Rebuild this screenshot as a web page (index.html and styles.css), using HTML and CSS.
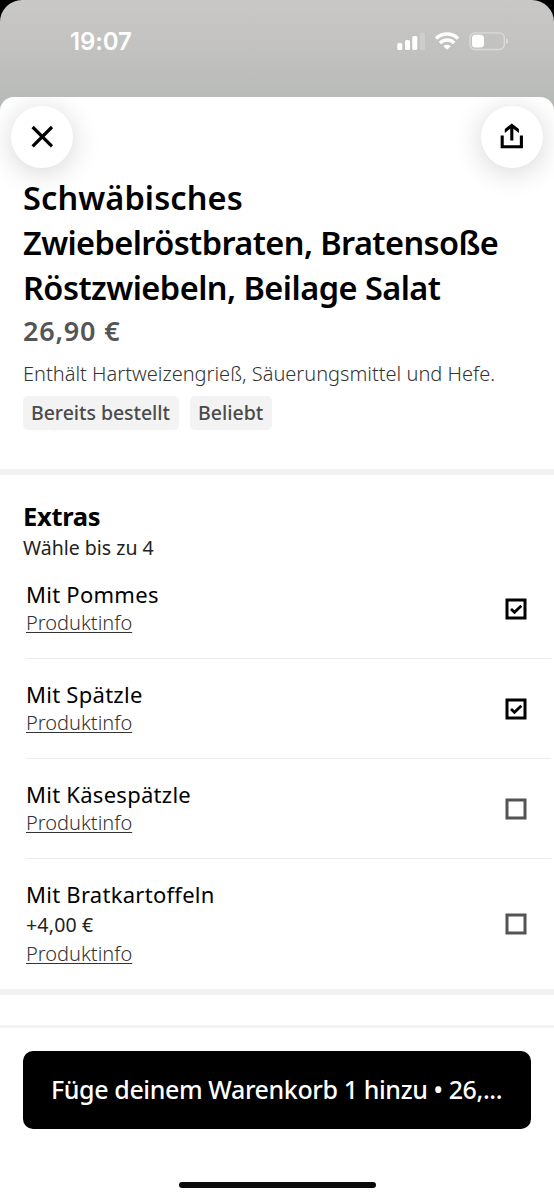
FILE: index.html
```html
<!DOCTYPE html>
<html lang="de">
<head>
<meta charset="utf-8">
<title>Schwäbisches Zwiebelröstbraten</title>
<link rel="stylesheet" href="styles.css">
</head>
<body>
<div class="screen">
  <header class="status">
    <span class="time">19:07</span>
    <svg class="indicators" width="112" height="20" viewBox="0 0 112 20" fill="#fff">
      <rect x="0.3" y="11" width="5" height="7" rx="1.5"/>
      <rect x="8" y="8" width="5" height="10" rx="1.5"/>
      <rect x="15.3" y="4" width="5" height="14" rx="1.5"/>
      <rect x="23" y="0.5" width="5" height="17.5" rx="1.5" opacity=".2"/>
      <g fill="none" stroke="#fff" stroke-width="3.5">
        <path d="M39.1 6.5A15.8 15.8 0 0 1 61.1 6.5"/>
        <path d="M43 10.9A10 10 0 0 1 57.2 10.9"/>
      </g>
      <path d="M50.1 17.8L46.4 14.2A5.4 5.4 0 0 1 53.8 14.2Z"/>
      <rect x="73" y="0.9" width="34.3" height="16.6" rx="5" fill="none" stroke="#fff" stroke-width="1.4" opacity=".4"/>
      <rect x="75" y="2.8" width="12" height="12.8" rx="3.6"/>
      <path d="M109 6.3Q111 7 111 9.2T109 12.1Z" opacity=".45"/>
    </svg>
  </header>
  <main class="sheet">
    <nav class="actions">
      <button class="round" aria-label="Schließen">
        <svg width="24" height="24" viewBox="0 0 24 24" fill="none" stroke="#000" stroke-width="3.2"><path d="M2.6 2L22 21.4M22 2L2.6 21.4"/></svg>
      </button>
      <button class="round" aria-label="Teilen">
        <svg width="24" height="28" viewBox="0 0 24 28" fill="none" stroke="#000" stroke-width="3.1"><path d="M2.2 12.6V23.8H21.4V12.6M11.8 17.5V3"/><path d="M11.8 0.4L18.9 6V10L11.8 4.4L4.8 10V6Z" fill="#000" stroke="none"/></svg>
      </button>
    </nav>
    <section class="product">
      <h1 class="title"><span class="t1">Schwäbisches</span><br><span class="t2">Zwiebelröstbraten, Bratensoße</span><br><span class="t3">Röstzwiebeln, Beilage Salat</span></h1>
      <p class="price">26,90 €</p>
      <p class="description">Enthält Hartweizengrieß, Säuerungsmittel und Hefe.</p>
      <div class="tags"><span class="tag tag-wide">Bereits bestellt</span><span class="tag tag-short">Beliebt</span></div>
    </section>
    <section class="extras">
      <h2 class="heading">Extras</h2>
      <p class="hint">Wähle bis zu 4</p>
      <ul class="options">
        <li class="option">
          <div><div class="name">Mit Pommes</div><a class="info">Produktinfo</a></div>
          <svg class="box" viewBox="0 0 22 22"><path class="frame on" d="M2 2H20V20H2Z"/><path class="tick" d="M6 11L9.5 14.3L16.3 7.8"/></svg>
        </li>
        <li class="option">
          <div><div class="name">Mit Spätzle</div><a class="info">Produktinfo</a></div>
          <svg class="box" viewBox="0 0 22 22"><path class="frame on" d="M2 2H20V20H2Z"/><path class="tick" d="M6 11L9.5 14.3L16.3 7.8"/></svg>
        </li>
        <li class="option">
          <div><div class="name">Mit Käsespätzle</div><a class="info">Produktinfo</a></div>
          <svg class="box" viewBox="0 0 22 22"><path class="frame" d="M2 2H20V20H2Z"/></svg>
        </li>
        <li class="option last">
          <div><div class="name">Mit Bratkartoffeln</div><div class="surcharge">+4,00 €</div><a class="info">Produktinfo</a></div>
          <svg class="box" viewBox="0 0 22 22"><path class="frame" d="M2 2H20V20H2Z"/></svg>
        </li>
      </ul>
    </section>
    <footer class="footer">
      <button class="cart">Füge deinem Warenkorb 1 hinzu • 26,...</button>
      <div class="home"></div>
    </footer>
  </main>
</div>
</body>
</html>
```
FILE: styles.css
```css
* { box-sizing: border-box; }
body, h1, h2, p, ul { margin: 0; padding: 0; }
body { background: #000; font-family: "Noto Sans", sans-serif; color: #000; }
button { border: 0; padding: 0; font-family: inherit; }
.screen {
  height: 1200px;
  overflow: hidden;
  border-radius: 22px 22px 0 0;
  background: linear-gradient(#c9c8c7, #c0c0be 60px, #b6bab6 105px);
  display: flex;
  flex-direction: column;
}
.status {
  flex: none;
  height: 97px;
  padding: 28px 45px 0 70px;
  display: flex;
  align-items: flex-start;
  justify-content: space-between;
}
.time { font: 600 24px/28px Inter, sans-serif; color: #fff; letter-spacing: -0.15px; }
.indicators { margin-top: 4px; }
.sheet {
  flex: 1;
  background: #fff;
  border-radius: 14px 14px 0 0;
  overflow: hidden;
  display: flex;
  flex-direction: column;
}
.actions { display: flex; justify-content: space-between; padding: 9px 11px 0; height: 78px; }
.round {
  width: 62px;
  height: 62px;
  border-radius: 50%;
  background: #fff;
  box-shadow: 0 4px 28px rgba(0, 0, 0, .17);
  display: flex;
  align-items: center;
  justify-content: center;
}
.product { height: 300px; padding-left: 23px; border-bottom: 6px solid #f3f3f3; white-space: nowrap; }
.title { font-size: 32.5px; line-height: 45px; font-weight: 600; }
.t1 { letter-spacing: 0.1px; }
.t2 { letter-spacing: -0.59px; }
.t3 { letter-spacing: -0.53px; }
.price { margin-top: 2px; font-size: 27px; line-height: 38px; font-weight: 600; letter-spacing: 0.8px; color: #555; }
.description { margin-top: 10px; font-size: 20px; line-height: 28px; font-weight: 300; color: #333; }
.tags { display: flex; gap: 11px; margin-top: 8px; }
.tag {
  height: 34px;
  border-radius: 5px;
  background: #f3f3f3;
  padding-left: 8px;
  font-size: 19.5px;
  line-height: 34px;
  font-weight: 500;
  color: #4b4b4b;
}
.tag-wide { width: 156px; letter-spacing: -0.05px; }
.tag-short { width: 82px; }
.extras { padding-top: 23px; border-bottom: 6px solid #f3f3f3; }
.heading { padding-left: 23px; font-size: 25.5px; line-height: 36px; font-weight: 700; letter-spacing: -0.3px; }
.hint { padding: 2px 0 0 23px; margin-bottom: -1px; font-size: 19.5px; line-height: 24px; color: #222; }
.options { list-style: none; padding-left: 26px; }
.option {
  display: flex;
  align-items: center;
  justify-content: space-between;
  height: 100px;
  margin-right: 3px;
  padding-right: 24px;
  border-bottom: 1px solid #ececec;
}
.last { height: 130px; border-bottom: 0; }
.name { margin-top: -1px; padding-bottom: 1px; font-size: 22px; line-height: 28px; font-weight: 450; letter-spacing: 0.27px; }
.surcharge { font-size: 19.5px; line-height: 31px; letter-spacing: 0.2px; color: #222; }
.info {
  display: block;
  width: max-content;
  font-size: 20px;
  line-height: 28px;
  font-weight: 300;
  color: #333;
  text-decoration: underline;
  text-decoration-thickness: 1px;
  text-underline-offset: 2px;
  text-decoration-skip-ink: none;
}
.box { width: 22px; height: 22px; }
.frame { fill: none; stroke: #545454; stroke-width: 3; }
.on { stroke: #000; }
.tick { fill: none; stroke: #000; stroke-width: 2.8; }
.footer { margin-top: 30px; padding: 23px 23px 0; border-top: 3px solid #f3f3f3; }
.cart {
  display: block;
  width: 508px;
  height: 78px;
  border-radius: 10px;
  background: #000;
  color: #fff;
  padding: 0 0 2px 28px;
  text-align: left;
  font-size: 25px;
  font-weight: 500;
  letter-spacing: -0.39px;
  white-space: nowrap;
}
.home { width: 197px; height: 6px; margin: 53px auto 0; border-radius: 3px; background: #0a0a0a; }
```
